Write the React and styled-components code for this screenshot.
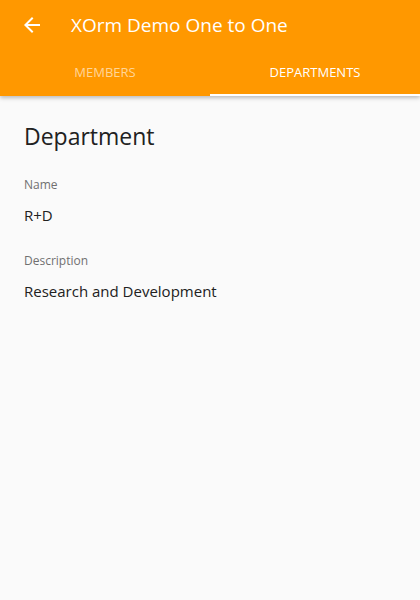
import styled, { createGlobalStyle } from 'styled-components';

const GlobalStyle = createGlobalStyle`
  html, body {
    margin: 0;
    padding: 0;
    background: #fafafa;
  }
  body {
    font-family: 'Open Sans', 'Noto Sans', sans-serif;
  }
`;

export default function App() {
  return (
    <>
      <GlobalStyle />
      <Page>
        <AppBar>
          <Toolbar>
            <BackButton aria-label="back">
              <svg width="24" height="24" viewBox="0 0 24 24">
                <path
                  d="M20 11H7.83l5.59-5.59L12 4l-8 8 8 8 1.41-1.41L7.83 13H20v-2z"
                  fill="#ffffff"
                />
              </svg>
            </BackButton>
            <Title>XOrm Demo One to One</Title>
          </Toolbar>
          <Tabs>
            <Tab>MEMBERS</Tab>
            <Tab active>DEPARTMENTS</Tab>
          </Tabs>
        </AppBar>
        <Content>
          <Heading>Department</Heading>
          <Field>
            <Label>Name</Label>
            <Value>R+D</Value>
          </Field>
          <Field>
            <Label>Description</Label>
            <Value>Research and Development</Value>
          </Field>
        </Content>
      </Page>
    </>
  );
}

const Page = styled.div`
  width: 420px;
  height: 600px;
  background: #fafafa;
  display: flex;
  flex-direction: column;
`;

const AppBar = styled.div`
  background: #ff9800;
  box-shadow: 0 2px 4px rgba(0, 0, 0, 0.25);
  display: flex;
  flex-direction: column;
`;

const Toolbar = styled.div`
  height: 50px;
  display: flex;
  align-items: center;
  padding: 0 20px;
  gap: 27px;
`;

const BackButton = styled.div`
  width: 24px;
  height: 24px;
  display: flex;
`;

const Title = styled.div`
  color: #ffffff;
  font-size: 19px;
`;

const Tabs = styled.div`
  display: flex;
  height: 46px;
`;

const Tab = styled.div`
  flex: 1;
  display: flex;
  align-items: center;
  justify-content: center;
  font-size: 13px;
  color: ${(p) => (p.active ? '#ffffff' : 'rgba(255, 255, 255, 0.6)')};
  border-bottom: 2px solid ${(p) => (p.active ? '#ffffff' : 'transparent')};
  box-sizing: border-box;
`;

const Content = styled.div`
  padding: 24px 24px;
  display: flex;
  flex-direction: column;
`;

const Heading = styled.div`
  font-size: 23px;
  color: #212121;
  margin-bottom: 24px;
`;

const Field = styled.div`
  display: flex;
  flex-direction: column;
  margin-bottom: 27px;
`;

const Label = styled.div`
  font-size: 12px;
  color: #707070;
  margin-bottom: 12px;
`;

const Value = styled.div`
  font-size: 15px;
  color: #212121;
`;
